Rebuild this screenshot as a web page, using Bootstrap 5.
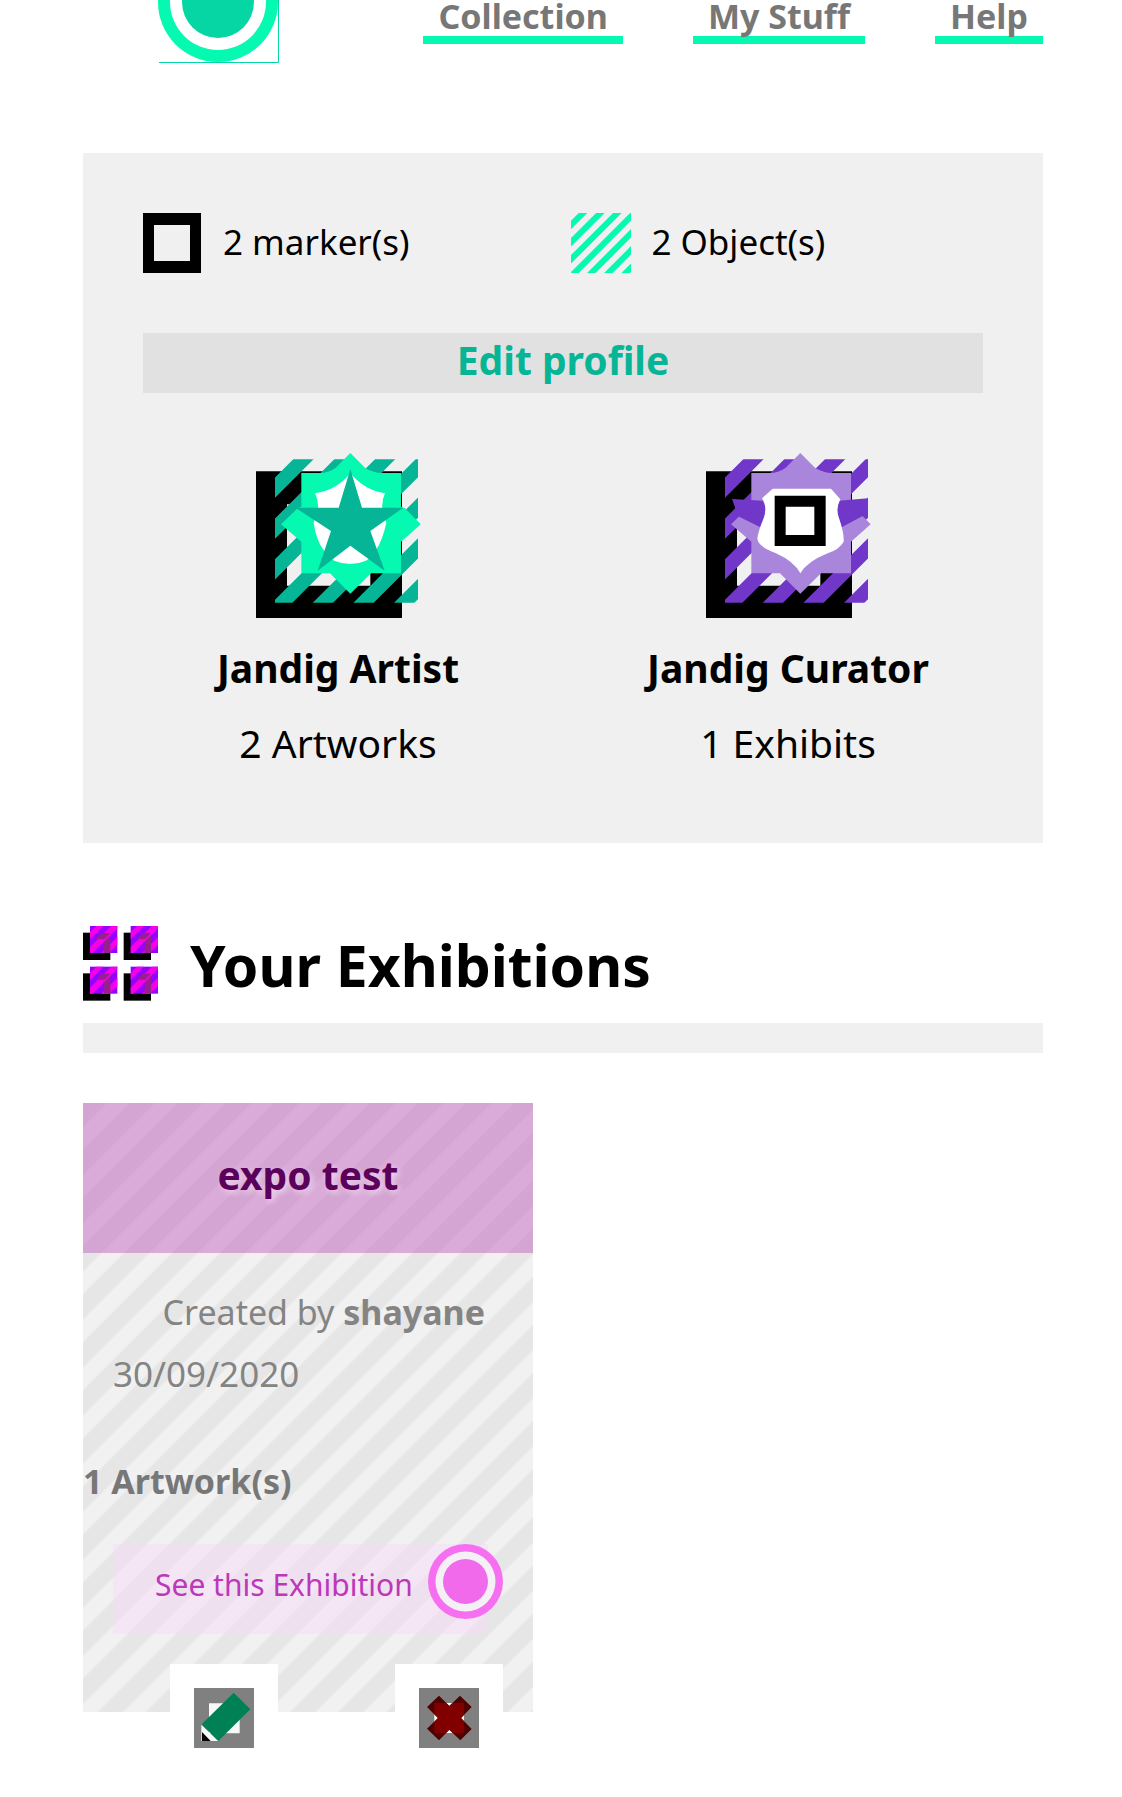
<!DOCTYPE html>
<html lang="en">
    <head>
        <meta charset="UTF-8">
        <meta name="viewport" content="width=device-width, initial-scale=1.0">
        <title>Jandig - My Stuff</title>
        <!-- Bootstrap CSS -->
        <link href="https://cdn.jsdelivr.net/npm/bootstrap@5.3.1/dist/css/bootstrap.min.css" rel="stylesheet">
        <!-- Custom CSS -->
        <style>
            body {
                font-family: "Noto Sans", sans-serif;
                font-size: 34px;
                color: #000;
            }
            a {
                text-decoration: none;
            }
            .page {
                padding: 0 79px 25px 83px;
            }
            .site-header {
                padding-left: 75px;
                margin-bottom: 90px;
            }
            .site-nav {
                gap: 70px;
            }
            .site-nav .nav-link {
                padding: 0 15px 4px;
                line-height: 32px;
                font-weight: bold;
                color: #777;
                border-bottom: 8px solid #05f9b0;
            }
            .profile {
                background: #f0f0f0;
                padding: 60px 60px 70px;
            }
            .stat {
                gap: 20px;
                font-size: 35px;
                line-height: 58px;
            }
            .stat-first {
                flex-basis: 51%;
            }
            .edit-profile {
                height: 60px;
                line-height: 54px;
                margin: 60px 0;
                font-size: 39px;
                font-weight: bold;
                color: #06b596;
                background: #e1e1e1;
            }
            .badges {
                margin: 0 -30px;
                font-size: 39px;
                line-height: 60px;
            }
            .badge-name {
                margin: 20px 0 15px;
                font-size: 39px;
                font-weight: bold;
                line-height: 60px;
            }
            .section-title {
                gap: 32px;
                margin: 83px 0 19px;
            }
            .section-title h1 {
                font-size: 57px;
                font-weight: bold;
                line-height: 78px;
            }
            .section-bar {
                height: 30px;
                margin-bottom: 50px;
                background: #f0f0f0;
            }
            .exhibit {
                display: flow-root;
                max-width: 450px;
                margin-bottom: 60px;
                color: #848484;
                line-height: 62px;
                background: repeating-linear-gradient(135deg, #e6e6e6 0 16px, #f1f1f1 18px 32px, #e6e6e6 34px);
            }
            .exhibit-title {
                height: 150px;
                line-height: 144px;
                margin-bottom: 28px;
                font-size: 39px;
                font-weight: bold;
                color: #5b005b;
                background: rgba(190, 85, 187, 0.45);
                text-shadow: 3px 3px 6px rgba(255, 255, 255, 0.5);
            }
            .author {
                padding-right: 48px;
            }
            .date {
                padding-left: 30px;
                font-size: 35px;
            }
            .artworks {
                margin: 45px 0 32px;
                font-weight: bold;
                color: #777;
            }
            .see {
                height: 90px;
                margin: 0 45px 30px 30px;
                padding-left: 42px;
                font-size: 30px;
                line-height: 82px;
                color: #bd37bb;
                background: rgba(250, 215, 250, 0.4);
            }
            .see svg {
                margin-right: -15px;
            }
            .actions {
                gap: 117px;
                padding-right: 30px;
                margin-bottom: -60px;
            }
            .actions a {
                padding: 24px;
                background: #fff;
            }
            svg {
                display: block;
                flex: none;
            }
        </style>
    </head>
    <body>
        <!-- Shared badge shapes -->
        <svg width="0" height="0" class="position-absolute" aria-hidden="true">
            <defs>
                <clipPath id="stripeArea"><rect x="222" y="88" width="429" height="430"/></clipPath>
                <path id="frame" fill-rule="evenodd" d="M165 124H603V564H165ZM258 223V467H508V223Z"/>
                <path id="stripes" clip-path="url(#stripeArea)" stroke-width="43" fill="none" d="M335 60l-500 500M458 60l-500 500M580 60l-500 500M702 60l-500 500M824 60l-500 500M946 60l-500 500M1068 60l-500 500"/>
                <path id="shield" d="M448 69L492 113Q515 128 545 129H600V230L612 235L659 283L600 335V430H510L448 491L387 430H301V335L240 283L290 235L301 230V129H355Q385 128 404 113Z"/>
                <g id="tile">
                    <path d="M24 38H106V120H24Z"/>
                    <path fill="#9600ff" d="M45 18H127V99H45Z"/>
                    <path fill="#96208c" d="M63 57L81 39H106V99H87V62Z"/>
                    <path fill="#f700e8" d="M45 37L64 18H85L45 58ZM45 81L108 18H127V25L53 99H45ZM79 99L127 51V75L103 99Z"/>
                    <path fill="#96208c" d="M63 57L81 39H106L88 57ZM106 70V99H87V89Z"/>
                </g>
            </defs>
        </svg>

        <div class="page">
            <header class="site-header d-flex justify-content-between align-items-start">
                <a href="#" aria-label="Jandig">
                    <svg width="121" height="63" viewBox="0 0 121 63">
                        <circle cx="60" cy="2" r="60" fill="#05f9b0"/>
                        <circle cx="60" cy="2" r="48" fill="#fff"/>
                        <circle cx="60" cy="2" r="36" fill="#05d6a3"/>
                        <path d="M1 62.5H120.5V0" fill="none" stroke="#05d6a3"/>
                    </svg>
                </a>
                <nav class="site-nav nav">
                    <a class="nav-link" href="#">Collection</a>
                    <a class="nav-link" href="#">My Stuff</a>
                    <a class="nav-link" href="#">Help</a>
                </nav>
            </header>

            <main>
                <!-- Profile -->
                <section class="profile">
                    <div class="d-flex">
                        <div class="stat stat-first d-flex">
                            <svg width="60" height="60"><path fill-rule="evenodd" d="M0 0H58V60H0ZM11 12V48H47V12Z"/></svg>
                            <span>2 marker(s)</span>
                        </div>
                        <div class="stat d-flex">
                            <svg width="60" height="60" viewBox="0 0 180 180">
                                <path stroke="#05f9b0" stroke-width="18" d="M46-10L-20 56M98-10L-20 108M149-10L-20 159M190 0L0 190M190 51L51 190M190 102L102 190M190 154L154 190"/>
                            </svg>
                            <span>2 Object(s)</span>
                        </div>
                    </div>

                    <a class="edit-profile d-block text-center" href="#">Edit profile</a>

                    <div class="badges row g-0 text-center">
                        <div class="col-6">
                            <svg class="mx-auto" width="165" height="165" viewBox="165 69 495 495">
                                <use href="#frame"/>
                                <use href="#stripes" stroke="#06b596"/>
                                <use href="#shield" fill="#05f9b0"/>
                                <path fill="#fff" d="M342 190Q405 182 448 130Q492 182 552 190Q540 215 545 245L556 278Q545 330 525 360Q515 380 495 392Q448 412 400 392Q380 380 368 360Q345 330 338 278L350 245Q355 215 342 190Z"/>
                                <path fill="#06b596" d="M448 118L483 233H607L508 303L551 422L448 347L350 422L390 303L283 233H413Z"/>
                            </svg>
                            <h2 class="badge-name">Jandig Artist</h2>
                            <div>2 Artworks</div>
                        </div>
                        <div class="col-6">
                            <svg class="mx-auto" width="165" height="165" viewBox="165 69 495 495">
                                <use href="#frame"/>
                                <use href="#stripes" stroke="#7137c8"/>
                                <use href="#shield" fill="#a986dc"/>
                                <g transform="translate(-60 0)">
                                    <path fill="#7137c8" d="M303 207L395 212L410 240L388 292L320 258L298 283L313 235ZM625 212L711 205V262L695 258L632 292L615 235Z"/>
                                    <path fill="#fff" d="M425 176H600L628 208Q614 235 623 262Q640 310 638 335Q625 358 590 370Q528 395 508 430Q490 395 435 370Q380 350 379 325Q383 300 398 265Q410 230 393 205Z"/>
                                    <path fill-rule="evenodd" d="M431 197H584V348H431ZM464 230V315H550V230Z"/>
                                </g>
                            </svg>
                            <h2 class="badge-name">Jandig Curator</h2>
                            <div>1 Exhibits</div>
                        </div>
                    </div>
                </section>

                <!-- Exhibitions -->
                <div class="section-title d-flex">
                    <svg width="75" height="75" viewBox="24 18 225 225">
                        <use href="#tile"/>
                        <use href="#tile" x="122"/>
                        <use href="#tile" y="122"/>
                        <use href="#tile" x="122" y="122"/>
                    </svg>
                    <h1 class="mb-0">Your Exhibitions</h1>
                </div>
                <div class="section-bar"></div>

                <article class="exhibit">
                    <h2 class="exhibit-title text-center">expo test</h2>
                    <div class="author text-end">Created by <b>shayane</b></div>
                    <div class="date">30/09/2020</div>
                    <div class="artworks">1 Artwork(s)</div>
                    <a class="see d-flex justify-content-between" href="#">
                        See this Exhibition
                        <svg width="75" height="75" viewBox="0 0 150 150">
                            <circle cx="75" cy="75" r="75" fill="#f56ff0"/>
                            <circle cx="75" cy="75" r="60" fill="#f5f0f5"/>
                            <circle cx="75" cy="75" r="45" fill="#f06aeb"/>
                        </svg>
                    </a>
                    <div class="actions d-flex justify-content-end">
                        <a href="#" aria-label="Edit exhibition">
                            <svg width="60" height="60" viewBox="0 0 180 180">
                                <path fill="#808080" d="M0 0H180V180H0Z"/>
                                <path fill="#f8f8f8" d="M45 46H137V136H45ZM22 110L73 159H22Z"/>
                                <path d="M24 132L50 159H24Z"/>
                                <path fill="#008055" d="M119 14L169 64L73 159L23 109Z"/>
                            </svg>
                        </a>
                        <a href="#" aria-label="Delete exhibition">
                            <svg width="60" height="60" viewBox="0 0 180 180">
                                <path fill="#808080" d="M0 0H180V180H0Z"/>
                                <path fill="#fff" d="M46 45H135V135H46Z"/>
                                <path fill="#500000" d="M60 23L91 54L123 23L158 57L126 90L158 123L124 157L91 125L60 157L24 122L57 90L24 57Z"/>
                                <path fill="#800000" d="M46 45H82L91 54L100 45H135V81L126 90L135 99V135H101L91 125L81 135H46V101L57 90L46 79Z"/>
                            </svg>
                        </a>
                    </div>
                </article>
            </main>
        </div>

        <script src="https://cdn.jsdelivr.net/npm/bootstrap@5.3.1/dist/js/bootstrap.bundle.min.js"></script>
    </body>
</html>
